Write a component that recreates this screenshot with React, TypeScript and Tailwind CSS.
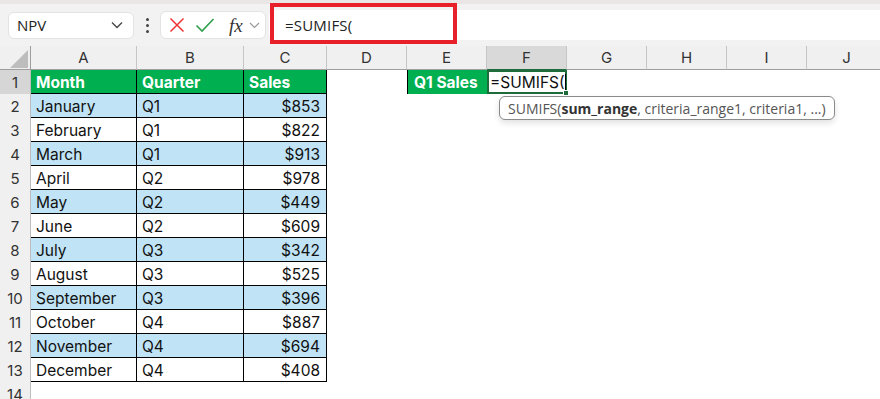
import React from "react";

const rows = [
  ["January", "Q1", "$853"],
  ["February", "Q1", "$822"],
  ["March", "Q1", "$913"],
  ["April", "Q2", "$978"],
  ["May", "Q2", "$449"],
  ["June", "Q2", "$609"],
  ["July", "Q3", "$342"],
  ["August", "Q3", "$525"],
  ["September", "Q3", "$396"],
  ["October", "Q4", "$887"],
  ["November", "Q4", "$694"],
  ["December", "Q4", "$408"],
];

const cols = ["A", "B", "C", "D", "E", "F", "G", "H", "I", "J"];
const grid = "grid grid-cols-[31px_106px_107px_83px_80px_80px_80px_80px_80px_80px_80px]";

const RowHead = ({ n, active }: { n: number; active?: boolean }) => (
  <div
    className={`h-6 pt-[2px] flex items-center justify-center border-r border-[#bdbdbd] text-[15px] text-[#333] ${
      active ? "bg-[#d6d6d6]" : "bg-[#f0f0f0]"
    }`}
  >
    {n}
  </div>
);

const Toolbar = () => (
  <div className="relative h-[46px] bg-[#f3f2f2] border-t-4 border-[#ebe6e6] flex items-center pl-2 font-['Open_Sans',sans-serif]">
    <div className="w-[126px] h-[27px] bg-white rounded-md border border-[#e3e3e3] flex items-center justify-between pl-2 pr-2">
      <span className="text-[15px] text-[#222]">NPV</span>
      <svg width="12" height="8" viewBox="0 0 12 8" className="mr-0.5">
        <path d="M1 1.5 6 6.5 11 1.5" stroke="#444" strokeWidth="1.3" fill="none" />
      </svg>
    </div>
    <div className="w-[26px] flex flex-col items-center gap-[3px]">
      <span className="w-[3px] h-[3px] rounded-full bg-[#444]" />
      <span className="w-[3px] h-[3px] rounded-full bg-[#444]" />
      <span className="w-[3px] h-[3px] rounded-full bg-[#444]" />
    </div>
    <div className="w-[106px] h-[28px] bg-white rounded-md border border-[#e3e3e3] flex items-center pl-2 gap-2.5">
      <svg width="16" height="16" viewBox="0 0 16 16">
        <path d="M1.5 1.5 14.5 14.5M14.5 1.5 1.5 14.5" stroke="#e33" strokeWidth="1.5" />
      </svg>
      <svg width="20" height="16" viewBox="0 0 20 16">
        <path d="M1.5 8.5 7 14 18.5 2" stroke="#2f9e4b" strokeWidth="1.6" fill="none" />
      </svg>
      <span className="font-['Liberation_Serif',serif] italic text-[19px] leading-none text-[#333] ml-1">fx</span>
      <svg width="11" height="7" viewBox="0 0 11 7" className="-ml-1">
        <path d="M1 1 5.5 5.5 10 1" stroke="#999" strokeWidth="1.2" fill="none" />
      </svg>
    </div>
    <div className="ml-[3px] flex-1 h-[30px] bg-white rounded-l-md flex items-center pl-4">
      <span className="text-[15px] text-[#222] tracking-[0.2px]">=SUMIFS(</span>
    </div>
    <div className="absolute left-[270px] top-[-1px] w-[187px] h-[41px] border-4 border-[#e8202a]" />
  </div>
);

export default function App() {
  return (
    <div className="w-[880px] h-[399px] overflow-hidden bg-white font-['Inter',sans-serif]">
      <Toolbar />
      <div className={grid}>
        <div className="h-6 bg-[#f0f0f0] border-r border-b border-[#9e9e9e] relative">
          <svg width="18" height="18" viewBox="0 0 18 18" className="absolute left-[10px] top-[4px]">
            <path d="M18 0V18H0Z" fill="#bdbdbd" />
          </svg>
        </div>
        {cols.map((c) => (
          <div
            key={c}
            className={`h-6 pt-[2px] flex items-center justify-center border-r border-b text-[15px] text-[#333] ${
              c === "F"
                ? "bg-[#d9d9d9] border-b-[#1e6b3c] border-r-[#c6c6c6]"
                : "bg-[#f0f0f0] border-r-[#c6c6c6] border-b-[#9e9e9e]"
            }`}
          >
            {c}
          </div>
        ))}
      </div>
      <div className="relative">
        <div className={grid}>
          <RowHead n={1} active />
          {["Month", "Quarter", "Sales"].map((h) => (
            <div
              key={h}
              className="h-6 pt-[2px] bg-[#00b050] border-r border-b border-black text-white font-bold text-[15.5px] flex items-center pl-[5px]"
            >
              {h}
            </div>
          ))}
          <div className="h-6" />
          <div className="h-6 pt-[2px] bg-[#00b050] border-l border-black text-white font-bold text-[15.5px] flex items-center pl-1.5">
            Q1 Sales
          </div>
          <div className="h-6 pt-[1px] border-2 border-[#1e6b3c] text-[15.5px] text-[#111] flex items-center pl-[1px] relative">
            =SUMIFS(
            <span className="w-px h-[17px] bg-black" />
            <span className="absolute right-[-4px] bottom-[-4px] w-[6px] h-[6px] bg-[#1e6b3c] border border-white" />
          </div>
          <div className="h-6 col-span-4" />
          {rows.map((r, i) => {
            const fill = i % 2 === 0 ? "bg-[#c0e4f5]" : "bg-white";
            return (
              <React.Fragment key={r[0]}>
                <RowHead n={i + 2} />
                <div className={`h-6 pt-[2px] ${fill} border-r border-b border-black text-[15.5px] text-[#111] flex items-center pl-[5px]`}>
                  {r[0]}
                </div>
                <div className={`h-6 pt-[2px] ${fill} border-r border-b border-black text-[15.5px] text-[#111] flex items-center pl-[5px]`}>
                  {r[1]}
                </div>
                <div className={`h-6 pt-[2px] ${fill} border-r border-b border-black text-[15.5px] text-[#111] flex items-center justify-end pr-[6px]`}>
                  {r[2]}
                </div>
                <div className="h-6 col-span-7" />
              </React.Fragment>
            );
          })}
          <RowHead n={14} />
          <div className="h-6 col-span-10" />
        </div>
        <div className="absolute left-[499px] top-[26px] h-[24px] px-2 bg-white border border-[#8a8a8a] rounded-md shadow-[0_3px_6px_rgba(0,0,0,0.12)] flex items-center text-[14px] text-[#555] font-['Open_Sans',sans-serif] whitespace-nowrap">
          SUMIFS(<b className="text-[#333]">sum_range</b>, criteria_range1, criteria1, ...)
        </div>
      </div>
    </div>
  );
}
